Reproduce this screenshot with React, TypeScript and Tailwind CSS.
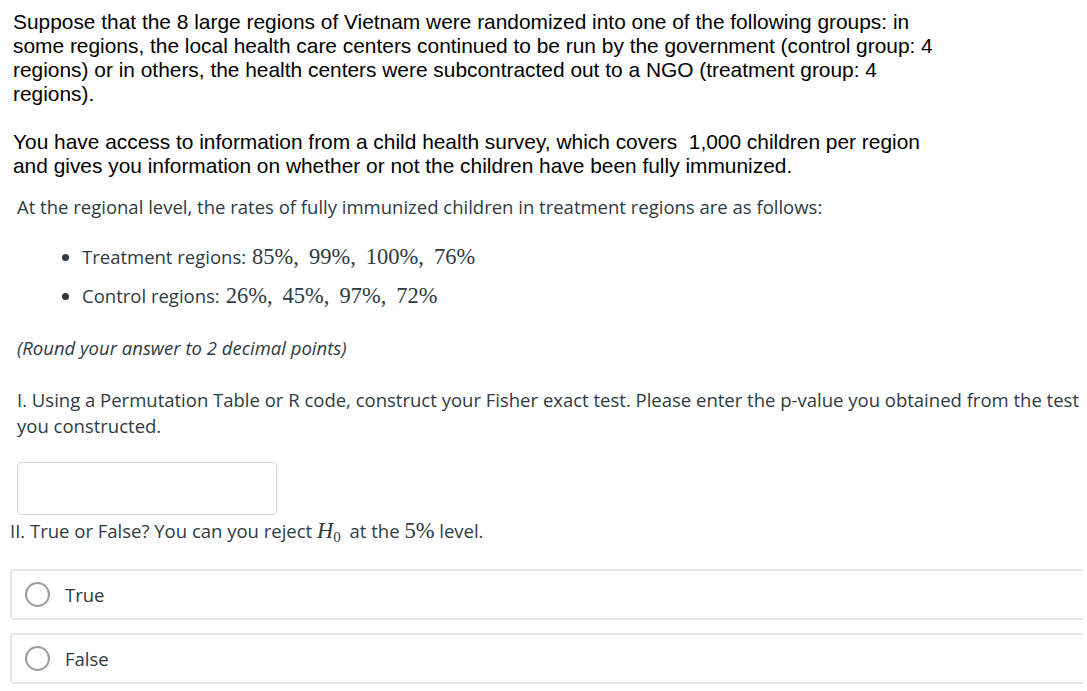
import React from 'react';

// ─── Math helpers ─────────────────────────────────────────────────────────────
const mathFont = { fontFamily: '"Liberation Serif", "DejaVu Serif", serif' };

function MathList({ items }: { items: string[] }) {
  return (
    <span className="text-[22.5px] ml-[6px]" style={mathFont}>
      {items.map((v, i) => (
        <span key={v + i}>
          {v}
          {i < items.length - 1 && <span className="mr-[10px]">,</span>}
        </span>
      ))}
    </span>
  );
}

function Radio({ label }: { label: string }) {
  return (
    <label className="flex items-center h-[51px] w-[1120px] border-2 border-[#e6e6e6] rounded-[4px] pl-[13px] shrink-0">
      <span className="w-[25px] h-[25px] rounded-full border-2 border-[#9a9ca6] bg-white shrink-0" />
      <span className="ml-[15px] text-[18.5px] text-[#2d3b45]">{label}</span>
    </label>
  );
}

// ─── App ──────────────────────────────────────────────────────────────────────
export default function App() {
  return (
    <div className="w-[1083px] h-[691px] overflow-hidden bg-white">
      <div className="pt-[10px] pl-[13px] w-[953px] text-[20.9px] leading-[24px] text-black" style={{ fontFamily: '"Liberation Sans", Arial, sans-serif' }}>
        <p>
          Suppose that the 8 large regions of Vietnam were randomized into one of the following groups: in some regions, the local health
          care centers continued to be run by the government (control group: 4 regions) or in others, the health centers were subcontracted
          out to a NGO (treatment group: 4 regions).
        </p>
        <p className="mt-[24px]">
          You have access to information from a child health survey, which covers&nbsp; 1,000 children per region and gives you information on
          whether or not the children have been fully immunized.
        </p>
      </div>

      <div className="text-[18.5px] text-[#2d3b45]" style={{ fontFamily: '"Open Sans", sans-serif' }}>
        <p className="pl-[17px] mt-[16px] leading-[26px]">
          At the regional level, the rates of fully immunized children in treatment regions are as follows:
        </p>

        <ul className="mt-[24px] pl-[82px] list-disc leading-[26px] flex flex-col gap-[13px]">
          <li>
            Treatment regions:
            <MathList items={['85%', '99%', '100%', '76%']} />
          </li>
          <li>
            Control regions:
            <MathList items={['26%', '45%', '97%', '72%']} />
          </li>
        </ul>

        <p className="pl-[17px] mt-[26px] italic leading-[26px]">(Round your answer to 2 decimal points)</p>

        <p className="pl-[17px] mt-[26px] leading-[26px] w-[1083px]">
          I. Using a Permutation Table or R code, construct your Fisher exact test. Please enter the p-value you obtained from the test you
          constructed.
        </p>

        <div className="pl-[17px] mt-[23px]">
          <input
            type="text"
            className="w-[260px] h-[53px] border border-[#d7d7d7] rounded-[4px] bg-white outline-none px-2"
          />
        </div>

        <p className="pl-[10px] mt-[3px] leading-[26px]">
          II. True or False? You can you reject{' '}
          <span className="text-[22.5px] italic mr-[4px]" style={mathFont}>
            H<sub className="not-italic text-[15px]">0</sub>
          </span>{' '}
          at the <span className="text-[22.5px]" style={mathFont}>5%</span> level.
        </p>

        <div className="pl-[10px] mt-[25px] flex flex-col gap-[13px]">
          <Radio label="True" />
          <Radio label="False" />
        </div>
      </div>
    </div>
  );
}
